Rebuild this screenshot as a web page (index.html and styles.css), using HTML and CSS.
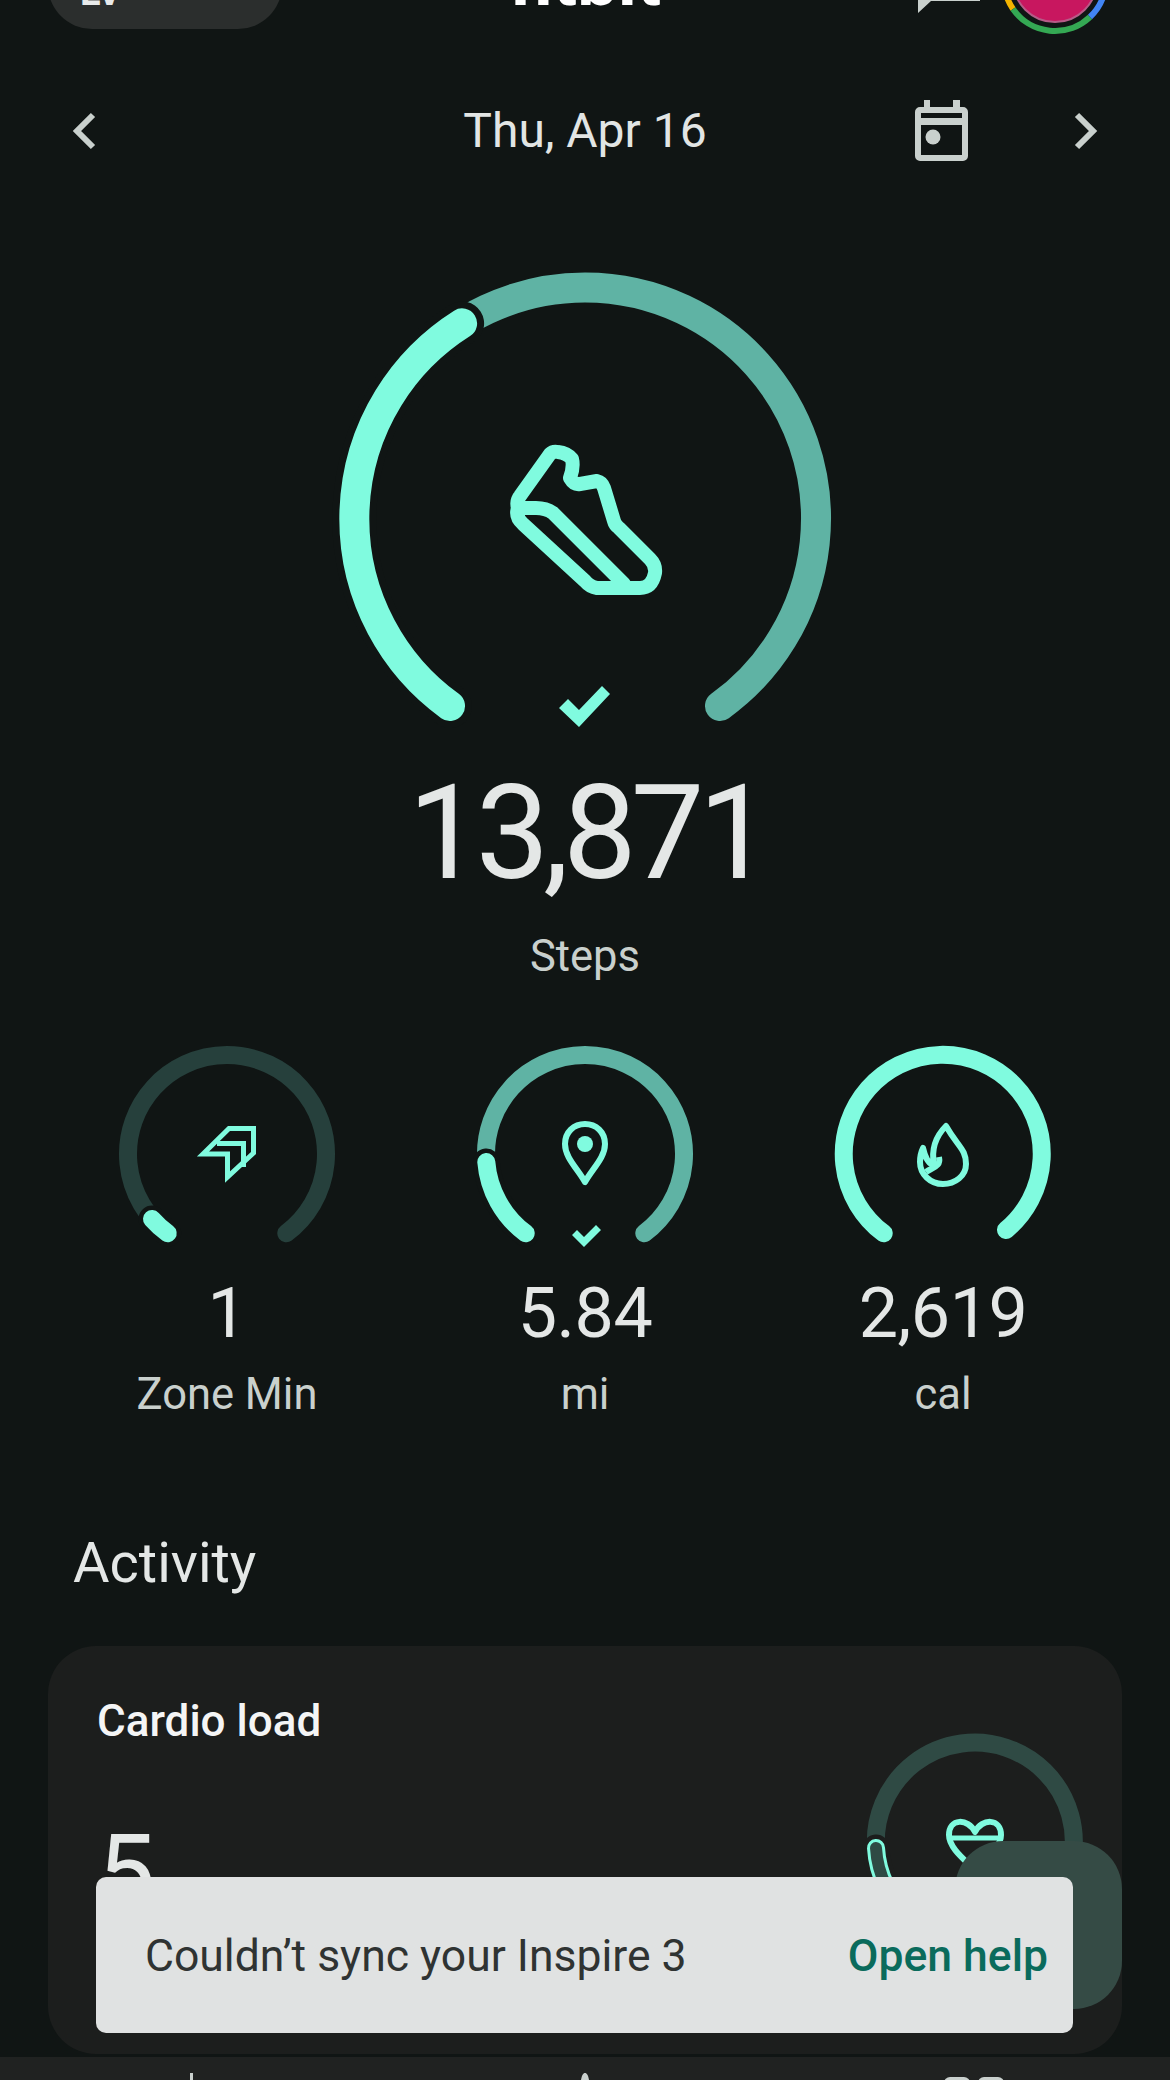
FILE: index.html
```html
<!DOCTYPE html>
<html lang="en">
<head>
<meta charset="utf-8">
<title>Fitbit</title>
<link rel="stylesheet" href="styles.css">
</head>
<body>
<div class="screen">
  <header class="topbar">
    <div class="pill"><span class="pill-text">LV</span></div>
    <div class="brand">fitbit</div>
    <svg class="top-icons" viewBox="900 0 220 40" width="220" height="40">
      <path class="fill-grey" d="M918 -4V13L931 1H980V-4Z"/>
      <circle cx="1055" cy="-20" r="42" fill="#c8175f" stroke="#b65c88" stroke-width="2"/>
      <path class="av" stroke="#f4b400" d="M1013 9A51 51 0 0 1 1005 -10"/>
      <path class="av" stroke="#34a853" d="M1013 9A51 51 0 0 0 1090 17"/>
      <path class="av" stroke="#4285f4" d="M1090 17A51 51 0 0 0 1105 -10"/>
    </svg>
  </header>

  <nav class="datebar">
    <div class="date-left">
      <svg viewBox="0 0 32 44" width="32" height="44"><path class="chev" d="M22 6L6 22L22 38"/></svg>
    </div>
    <div class="date">Thu, Apr 16</div>
    <div class="date-right">
      <svg viewBox="915 100 53 62" width="53" height="62">
        <path class="fill-grey" d="M924 100h6v7h23v-7h7v7h3a5 5 0 0 1 5 5v44a5 5 0 0 1-5 5h-43a5 5 0 0 1-5-5v-44a5 5 0 0 1 5-5h4zM921 125v30h41v-30z"/>
        <rect class="dark-fill" x="921" y="113" width="41" height="5"/>
        <circle class="fill-grey" cx="933" cy="137" r="7.5"/>
      </svg>
      <svg viewBox="0 0 32 44" width="32" height="44"><path class="chev" d="M10 6L26 22L10 38"/></svg>
    </div>
  </nav>

  <section class="hero">
    <svg class="hero-ring" viewBox="315 260 540 475" width="540" height="475">
      <path class="arc hero-dark" d="M450 705A231 231 0 1 1 720 705"/>
      <path class="arc halo" d="M450 705A231 231 0 0 1 462.1 322.4"/>
      <path class="arc hero-bright" d="M450 705A231 231 0 0 1 462.1 322.4"/>
      <path class="shoe" d="M558 451Q567 452 572 458Q574 466 570 477Q574 484 580 483L597 480Q602 481 604 487L614 520Q615 524 619 527L650 558Q656 564 655 572Q652 587 640 587H597Q590 586 585 580L523 523Q515 516 518 507Q516 500 520 495L550 453Q553 450 558 451Z"/>
      <path class="shoe" d="M518 507H536Q546 507 553 512L624 583"/>
      <polygon class="fill-bright" points="559,707 568,698 579,709 602,685 610,693 579,726"/>
    </svg>
    <div class="hero-value">13,871</div>
    <div class="hero-label">Steps</div>
  </section>

  <section class="stats">
    <div class="stat">
      <svg viewBox="107 1040 240 215" width="240" height="215">
        <path class="arc small zone-dark" d="M167.7 1234.3A99 99 0 1 1 286.3 1234.3"/>
        <path class="arc small halo-small" d="M167.7 1234.3A99 99 0 0 1 152 1220"/>
        <path class="arc small bright" d="M167.7 1234.3A99 99 0 0 1 152 1220"/>
        <path class="line" d="M203 1155L229 1129.5H253.5V1154L227.5 1178V1155ZM217 1144.5H243.5V1168"/>
      </svg>
      <div class="stat-value">1</div>
      <div class="stat-label">Zone Min</div>
    </div>
    <div class="stat">
      <svg viewBox="465 1040 240 215" width="240" height="215">
        <path class="arc small hero-dark" d="M525.7 1234.3A99 99 0 1 1 644.3 1234.3"/>
        <path class="arc small halo-small" d="M525.7 1234.3A99 99 0 0 1 486.3 1163"/>
        <path class="arc small bright" d="M525.7 1234.3A99 99 0 0 1 486.3 1163"/>
        <path class="line thick" d="M585 1183C578 1170 565 1159 565 1145C565 1133 574 1125 585 1125C596 1125 605 1133 605 1145C605 1159 592 1170 585 1183Z"/>
        <circle class="fill-bright" cx="585" cy="1145" r="8"/>
        <polygon class="fill-bright" points="572,1236 577,1231 584,1238 596,1226 601,1231 584,1248"/>
      </svg>
      <div class="stat-value">5.84</div>
      <div class="stat-label">mi</div>
    </div>
    <div class="stat">
      <svg viewBox="823 1040 240 215" width="240" height="215">
        <path class="arc small bright" d="M883.7 1234.3A99 99 0 1 1 1006 1231"/>
        <path class="line thick" d="M946 1127C958 1148 966 1150 966 1165C966 1177 955 1185 943 1185C930 1185 920 1175 920 1163C920 1158 921 1153 923 1149C925 1158 928 1165 934 1166C931 1150 936 1137 946 1127Z"/>
        <path class="line thick" d="M926 1173C933 1168 941 1168 939 1158"/>
      </svg>
      <div class="stat-value">2,619</div>
      <div class="stat-label">cal</div>
    </div>
  </section>

  <h2 class="section-title">Activity</h2>

  <article class="card">
    <div class="card-text">
      <div class="card-title">Cardio load</div>
      <div class="card-value">5</div>
    </div>
    <svg class="card-ring" viewBox="855 1726 240 190" width="240" height="190">
      <path class="arc small load-dark" d="M876 1850A99 99 0 1 1 1050 1908"/>
      <path class="arc small halo-card" d="M876 1850A99 99 0 0 0 886 1888"/>
      <path class="arc small bright" d="M876 1850A99 99 0 0 0 886 1888"/>
      <path class="arc load-inner" d="M876 1850A99 99 0 0 0 886 1888"/>
      <path class="line thick" d="M975 1834C968 1820 949 1820 949 1837C949 1850 965 1862 975 1872C985 1862 1001 1850 1001 1837C1001 1820 982 1820 975 1834Z"/>
      <path class="line" d="M950 1840H1000"/>
    </svg>
  </article>

  <div class="fab"></div>
  <div class="snackbar">
    <span class="snack-text">Couldn’t sync your Inspire 3</span>
    <span class="snack-action">Open help</span>
  </div>

  <footer class="tabbar">
    <div class="tab"><svg viewBox="0 0 20 7" width="20" height="7"><rect class="fill-grey" x="8" y="0" width="3" height="7"/></svg></div>
    <div class="tab"><svg viewBox="0 0 20 7" width="20" height="7"><path class="fill-grey" d="M10 0C12 0 13 2 14 7H6C7 2 8 0 10 0Z"/></svg></div>
    <div class="tab tab-grid"><span class="pad"></span><span class="pad"></span></div>
  </footer>
</div>
</body>
</html>
```
FILE: styles.css
```css
* { box-sizing: border-box; margin: 0; padding: 0; }
html, body { background: #101514; }
body { width: 1170px; height: 2080px; overflow: hidden; font-family: Roboto, "Noto Sans", sans-serif; }
.screen { position: relative; width: 1170px; height: 2080px; overflow: hidden; padding: 0 48px; display: flex; flex-direction: column; color: #e2e5e4; }
svg { display: block; }

.topbar { position: relative; height: 34px; display: flex; justify-content: space-between; align-items: flex-start; }
.pill { width: 234px; height: 89px; margin-top: -60px; border-radius: 44px; background: #2b2e2d; padding: 20px 0 0 32px; overflow: hidden; }
.pill-text { display: block; font-size: 38px; line-height: 65px; font-weight: 700; color: #e8eaea; }
.brand { position: absolute; left: 437px; top: -55px; width: 200px; text-align: center; font-size: 72px; line-height: 72px; font-weight: 700; color: #fff; }
.top-icons { margin-right: 2px; }
.av { fill: none; stroke-width: 6; }

.datebar { display: grid; grid-template-columns: 1fr auto 1fr; align-items: center; margin: 66px 23px 0; height: 62px; }
.date { font-size: 48px; line-height: 62px; color: #e2e5e4; }
.date-right { display: flex; justify-content: flex-end; align-items: center; gap: 99px; }
.chev { fill: none; stroke: #c9d0cd; stroke-width: 6; }
.fill-grey { fill: #c9d0cd; }
.dark-fill { fill: #101514; }

.hero { display: flex; flex-direction: column; align-items: center; margin-top: 99px; }
.arc { fill: none; stroke-linecap: round; stroke-width: 30; }
.arc.small { stroke-width: 18; }
.hero-dark { stroke: #5fb3a4; }
.hero-bright { stroke: #80fbdf; }
.bright { stroke: #80fbdf; }
.arc.halo { stroke: #101514; stroke-width: 44; }
.arc.halo-small { stroke: #101514; stroke-width: 27; }
.arc.halo-card { stroke: #1c1e1d; stroke-width: 27; }
.zone-dark { stroke: #26403c; }
.load-dark { stroke: #2f4a44; }
.arc.load-inner { stroke: #2f4a44; stroke-width: 12; }
.shoe { fill: none; stroke: #80fbdf; stroke-width: 14; stroke-linejoin: round; stroke-linecap: round; }
.fill-bright { fill: #80fbdf; }
.line { fill: none; stroke: #80fbdf; stroke-width: 5; stroke-linejoin: miter; }
.line.thick { stroke-width: 6; stroke-linejoin: round; }

.hero-value { margin-top: 32px; padding-left: 4px; font-size: 131px; line-height: 131px; font-weight: 400; letter-spacing: -6px; color: #e4e7e6; }
.hero-label { margin-top: 32px; font-size: 43.5px; line-height: 52px; color: #c9d0cd; }

.stats { display: grid; grid-template-columns: repeat(3, 358px); margin-top: 56px; }
.stat { display: flex; flex-direction: column; align-items: center; }
.stat-value { margin-top: 19px; font-size: 70px; line-height: 80px; font-weight: 400; letter-spacing: -0.5px; color: #e4e7e6; }
.stat-label { margin-top: 16px; font-size: 43.5px; line-height: 52px; color: #c9d0cd; }

.section-title { margin-top: 111px; margin-left: 25px; font-size: 56px; line-height: 62px; font-weight: 400; color: #e4e7e6; }

.card { margin-top: 52px; height: 408px; border-radius: 48px; background: #1c1e1d; padding: 49px 27px 0 49px; display: flex; justify-content: space-between; align-items: flex-start; }
.card-title { font-size: 44px; line-height: 52px; font-weight: 500; color: #f4f5f5; }
.card-value { margin-top: 71px; font-size: 104px; line-height: 110px; font-weight: 400; color: #e4e7e6; }
.card-ring { margin-top: 29px; }

.fab { position: absolute; left: 955px; top: 1841px; width: 167px; height: 168px; border-radius: 48px; background: #354b45; }
.snackbar { position: absolute; left: 96px; top: 1877px; width: 977px; height: 156px; border-radius: 10px; background: #e0e2e2; padding: 2px 25px 0 49px; display: flex; align-items: center; justify-content: space-between; font-size: 44.5px; }
.snack-text { color: #2f3332; }
.snack-action { color: #0a6b5c; font-weight: 500; }

.tabbar { position: absolute; left: 0; right: 0; top: 2057px; height: 23px; background: #202221; display: grid; grid-template-columns: 385px 400px 385px; padding-top: 16px; }
.tab { display: flex; justify-content: center; }
.tab:first-child { justify-content: flex-end; padding-right: 183px; }
.tab-grid { justify-content: flex-start; padding-left: 159px; gap: 8px; padding-top: 4px; }
.pad { width: 26px; height: 8px; border-radius: 6px 6px 0 0; background: #c9d0cd; }
```
